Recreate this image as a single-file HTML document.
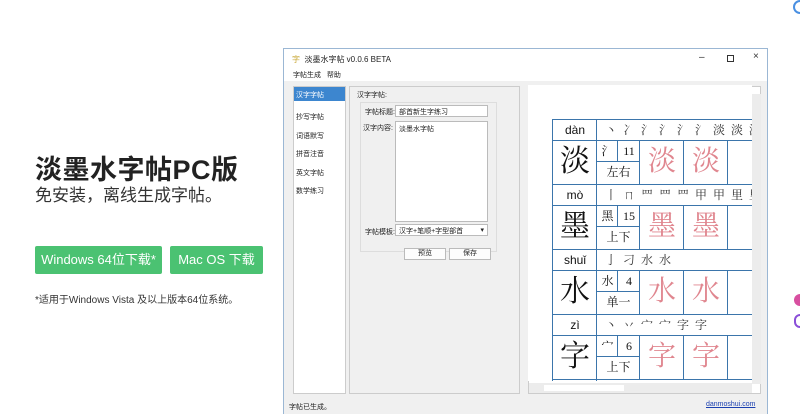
<!DOCTYPE html>
<html><head><meta charset="utf-8"><style>
*{margin:0;padding:0;box-sizing:border-box}
body{width:800px;height:414px;overflow:hidden;background:#fff;font-family:"Liberation Sans","Noto Sans CJK SC",sans-serif;position:relative}
.a{position:absolute}
h1{position:absolute;left:35px;top:153px;font-size:27px;line-height:34px;font-weight:bold;color:#222;letter-spacing:0.5px}
.sub{left:35px;top:185px;font-size:17px;line-height:22px;color:#333}
.btn{top:246px;height:28px;background:#4bc272;color:#fff;font-size:13px;line-height:28px;text-align:center;border-radius:2px}
.note{left:35px;top:291px;font-size:10px;color:#333}
.win{left:283px;top:48px;width:485px;height:366px;border:1px solid #9bb7d4;border-bottom:none;background:#f0f0f0}
.sm{font-size:7px;color:#222}
.clip{left:528px;top:85px;width:224px;height:296px;overflow:hidden;background:#fff}
.blk{position:absolute;left:24px;width:220px;height:65px}
.blk div{position:absolute;border:1.5px solid #3b75ab;background:#fff;text-align:center;color:#111;font-family:"Liberation Serif","Noto Serif CJK SC",serif}
.py{font-family:"Liberation Sans",sans-serif!important;font-size:12px;line-height:20px}
.big{font-size:30px;line-height:42px}
.red{color:#e0868f!important;font-size:28px;line-height:42px}
.s{font-size:12px;line-height:20px}
.str{font-size:12px;line-height:20px;text-align:left!important;padding-left:8px;letter-spacing:6px;color:#333!important}
</style></head><body>
<h1>淡墨水字帖PC版</h1>
<div class="a sub">免安装，离线生成字帖。</div>
<div class="a btn" style="left:35px;width:127px">Windows 64位下载*</div>
<div class="a btn" style="left:170px;width:93px">Mac OS 下载</div>
<div class="a note">*适用于Windows Vista 及以上版本64位系统。</div>
<div class="a" style="left:793px;top:0;width:14px;height:14px;border-radius:7px;border:2px solid #4a90e2"></div>
<div class="a" style="left:794px;top:294px;width:12px;height:12px;border-radius:6px;background:#d84fa0"></div>
<div class="a" style="left:794px;top:314px;width:12px;height:14px;border-radius:6px;border:2px solid #8a4fd8;background:#fff"></div>

<div class="a win">
 <div class="a" style="left:0;top:0;width:483px;height:19px;background:#fff"></div>
 <div class="a sm" style="left:8px;top:5px;font-size:8px"><span style="color:#c9a93a">字</span>&nbsp; 淡墨水字帖 v0.0.6 BETA</div>
 <div class="a" style="left:415px;top:3px;font-size:10px;color:#333">–</div>
 <div class="a" style="left:443px;top:6px;width:7px;height:7px;border:1px solid #333"></div>
 <div class="a" style="left:469px;top:2px;font-size:10px;color:#333">×</div>
 <div class="a" style="left:0;top:19px;width:483px;height:13px;background:#fff"></div>
 <div class="a sm" style="left:9px;top:21px">字帖生成&nbsp;&nbsp; 帮助</div>
 <div class="a" style="left:9px;top:37px;width:53px;height:308px;background:#fff;border:1px solid #ccc"></div>
 <div class="a" style="left:10px;top:38px;width:51px;height:14px;background:#3d86cf"></div>
 <div class="a sm" style="left:12px;top:41px;color:#fff">汉字字帖</div>
 <div class="a sm" style="left:12px;top:60px;line-height:18.5px">抄写字帖<br>词语默写<br>拼音注音<br>英文字帖<br>数学练习</div>
 <div class="a" style="left:65px;top:37px;width:171px;height:308px;border:1px solid #ccc"></div>
 <div class="a sm" style="left:73px;top:41px">汉字字帖:</div>
 <div class="a" style="left:76px;top:53px;width:137px;height:150px;border:1px solid #ddd"></div>
 <div class="a sm" style="left:81px;top:58px">字帖标题:</div>
 <div class="a sm" style="left:111px;top:56px;width:93px;height:12px;background:#fff;border:1px solid #bbb;padding:1px 3px">部首新生字练习</div>
 <div class="a sm" style="left:79px;top:74px">汉字内容:</div>
 <div class="a sm" style="left:111px;top:72px;width:93px;height:101px;background:#fff;border:1px solid #bbb;padding:2px 3px">淡墨水字帖</div>
 <div class="a sm" style="left:81px;top:178px">字帖模板:</div>
 <div class="a sm" style="left:111px;top:175px;width:93px;height:12px;background:#fff;border:1px solid #bbb;padding:1px 3px">汉字+笔顺+字型部首 <span style="float:right">▾</span></div>
 <div class="a sm" style="left:120px;top:199px;width:42px;height:12px;background:#fdfdfd;border:1px solid #bbb;text-align:center;line-height:10px">预览</div>
 <div class="a sm" style="left:165px;top:199px;width:42px;height:12px;background:#fdfdfd;border:1px solid #bbb;text-align:center;line-height:10px">保存</div>
 <div class="a" style="left:244px;top:37px;width:233px;height:308px;border:1px solid #ccc;background:#fff"></div>
 <div class="a" style="left:468px;top:45px;width:9px;height:290px;background:#ececec"></div>
 <div class="a" style="left:245px;top:334px;width:223px;height:10px;background:#ececec"></div>
 <div class="a" style="left:260px;top:336px;width:80px;height:6px;background:#fff"></div>
 <div class="a sm" style="left:5px;top:353px">字帖已生成。</div>
 <div class="a sm" style="left:422px;top:352px;color:#1a3fb0;text-decoration:underline">danmoshui.com</div>
</div>

<div class="a clip">
 <div class="blk" style="top:34px">
  <div class="py" style="left:0;top:0;width:46px;height:23px">dàn</div>
  <div class="str" style="left:44px;top:0;width:200px;height:23px">丶冫氵氵氵氵淡淡淡</div>
  <div class="big" style="left:0;top:21px;width:46px;height:45px">淡</div>
  <div class="s" style="left:44px;top:21px;width:23px;height:23px">氵</div>
  <div class="s" style="left:65px;top:21px;width:24px;height:23px">11</div>
  <div class="s" style="left:44px;top:42px;width:45px;height:24px">左右</div>
  <div class="red" style="left:87px;top:21px;width:46px;height:45px">淡</div>
  <div class="red" style="left:131px;top:21px;width:46px;height:45px">淡</div>
  <div style="left:175px;top:21px;width:46px;height:45px"></div>
 </div>
 <div class="blk" style="top:99px">
  <div class="py" style="left:0;top:0;width:46px;height:23px">mò</div>
  <div class="str" style="left:44px;top:0;width:200px;height:23px">丨ㄇ罒罒罒甲甲里里</div>
  <div class="big" style="left:0;top:21px;width:46px;height:45px">墨</div>
  <div class="s" style="left:44px;top:21px;width:23px;height:23px">黑</div>
  <div class="s" style="left:65px;top:21px;width:24px;height:23px">15</div>
  <div class="s" style="left:44px;top:42px;width:45px;height:24px">上下</div>
  <div class="red" style="left:87px;top:21px;width:46px;height:45px">墨</div>
  <div class="red" style="left:131px;top:21px;width:46px;height:45px">墨</div>
  <div style="left:175px;top:21px;width:46px;height:45px"></div>
 </div>
 <div class="blk" style="top:164px">
  <div class="py" style="left:0;top:0;width:46px;height:23px">shuǐ</div>
  <div class="str" style="left:44px;top:0;width:200px;height:23px">亅刁水水</div>
  <div class="big" style="left:0;top:21px;width:46px;height:45px">水</div>
  <div class="s" style="left:44px;top:21px;width:23px;height:23px">水</div>
  <div class="s" style="left:65px;top:21px;width:24px;height:23px">4</div>
  <div class="s" style="left:44px;top:42px;width:45px;height:24px">单一</div>
  <div class="red" style="left:87px;top:21px;width:46px;height:45px">水</div>
  <div class="red" style="left:131px;top:21px;width:46px;height:45px">水</div>
  <div style="left:175px;top:21px;width:46px;height:45px"></div>
 </div>
 <div class="blk" style="top:229px">
  <div class="py" style="left:0;top:0;width:46px;height:23px">zì</div>
  <div class="str" style="left:44px;top:0;width:200px;height:23px">丶丷宀宀字字</div>
  <div class="big" style="left:0;top:21px;width:46px;height:45px">字</div>
  <div class="s" style="left:44px;top:21px;width:23px;height:23px">宀</div>
  <div class="s" style="left:65px;top:21px;width:24px;height:23px">6</div>
  <div class="s" style="left:44px;top:42px;width:45px;height:24px">上下</div>
  <div class="red" style="left:87px;top:21px;width:46px;height:45px">字</div>
  <div class="red" style="left:131px;top:21px;width:46px;height:45px">字</div>
  <div style="left:175px;top:21px;width:46px;height:45px"></div>
 </div>
 <div class="blk" style="top:294px"><div style="left:0;top:0;width:46px;height:23px"></div><div style="left:44px;top:0;width:200px;height:23px"></div></div>
</div>
</body></html>
